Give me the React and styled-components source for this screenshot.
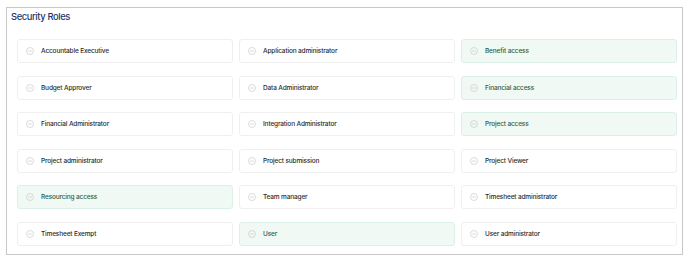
import React from 'react';
import styled, { createGlobalStyle } from 'styled-components';

const GlobalStyle = createGlobalStyle`
  html, body {
    margin: 0;
    padding: 0;
    background: #ffffff;
    font-family: Inter, "Noto Sans", sans-serif;
  }
`;

const Panel = styled.section`
  margin: 7px 0 0 6px;
  width: 677px;
  height: 248px;
  box-sizing: border-box;
  border: 1px solid #c9c9c9;
  padding: 3px 5px 0 10px;
`;

const Title = styled.h2`
  margin: 0 0 0 -6px;
  font-size: 9.4px;
  font-weight: 500;
  letter-spacing: -0.4px;
  line-height: 10px;
  color: #23386b;
  padding-top: 1px;
`;

const Grid = styled.div`
  display: grid;
  grid-template-columns: repeat(3, 216px);
  grid-auto-rows: 24px;
  column-gap: 6px;
  row-gap: 12.6px;
  margin-top: 17px;
`;

const Card = styled.div`
  display: flex;
  align-items: center;
  gap: 7px;
  padding: 0 8px;
  box-sizing: border-box;
  border-radius: 3px;
  border: 1px solid ${({ $active }) => ($active ? '#ddf0e7' : '#efefef')};
  background: ${({ $active }) => ($active ? '#f1f9f5' : '#ffffff')};
  color: ${({ $active }) => ($active ? '#2e5d46' : '#2b2b2b')};
  font-size: 6.5px;
  font-weight: 500;
  letter-spacing: -0.15px;
`;

const Icon = styled.svg`
  flex: none;
  width: 8px;
  height: 8px;
`;

const MinusCircle = () => (
  <Icon viewBox="0 0 16 16" fill="none" stroke="#c8c8c8" strokeWidth="1.3">
    <circle cx="8" cy="8" r="7" />
    <line x1="5" y1="8" x2="11" y2="8" strokeLinecap="round" />
  </Icon>
);

const roles = [
  ['Accountable Executive', false],
  ['Application administrator', false],
  ['Benefit access', true],
  ['Budget Approver', false],
  ['Data Administrator', false],
  ['Financial access', true],
  ['Financial Administrator', false],
  ['Integration Administrator', false],
  ['Project access', true],
  ['Project administrator', false],
  ['Project submission', false],
  ['Project Viewer', false],
  ['Resourcing access', true],
  ['Team manager', false],
  ['Timesheet administrator', false],
  ['Timesheet Exempt', false],
  ['User', true],
  ['User administrator', false],
];

const App = () => (
  <>
    <GlobalStyle />
    <Panel>
      <Title>Security Roles</Title>
      <Grid>
        {roles.map(([name, active]) => (
          <Card key={name} $active={active}>
            <MinusCircle />
            {name}
          </Card>
        ))}
      </Grid>
    </Panel>
  </>
);

export default App;
